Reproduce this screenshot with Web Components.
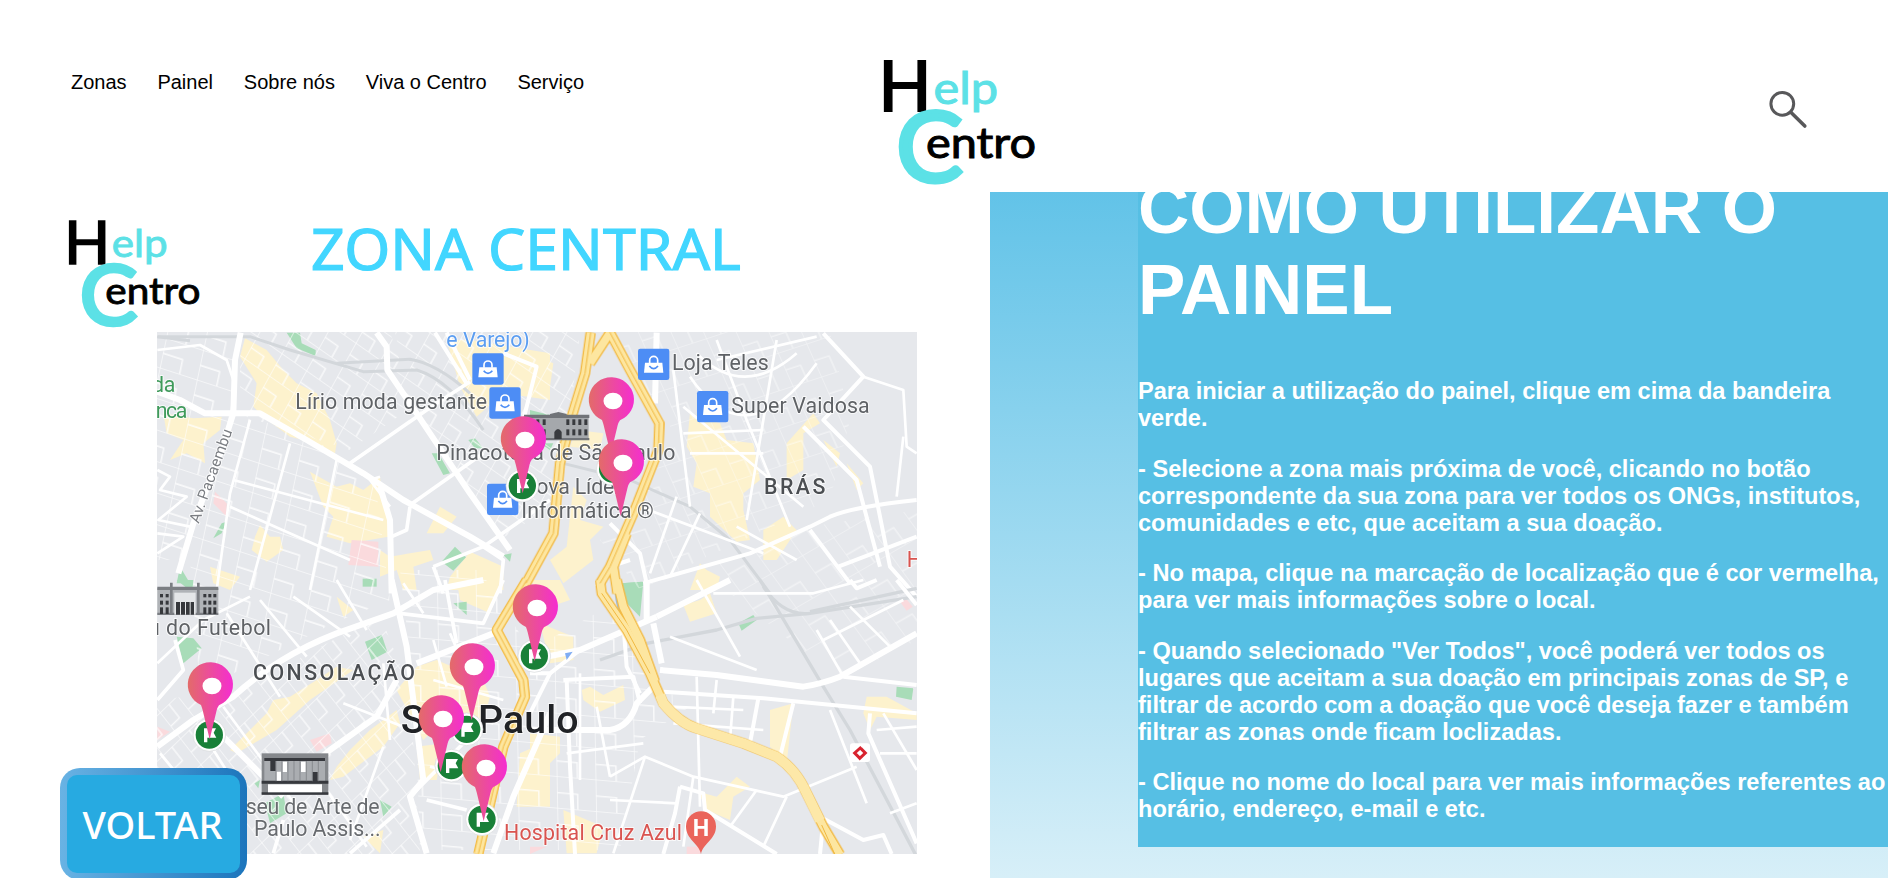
<!DOCTYPE html>
<html lang="pt-BR">
<head>
<meta charset="utf-8">
<title>Help Centro - Zona Central</title>
<style>
html, body { margin: 0; height: 100%; background: #fff; overflow: hidden; font-family: "Liberation Sans", Arial, sans-serif; }
</style>
</head>
<body>
<help-page>
  <site-header slot="header">
    <nav-link>Zonas</nav-link><nav-link>Painel</nav-link><nav-link>Sobre nós</nav-link><nav-link>Viva o Centro</nav-link><nav-link>Serviço</nav-link>
  </site-header>
  <zone-board slot="board">
    <back-button>VOLTAR</back-button>
  </zone-board>
  <guide-panel slot="panel">
    <span slot="title">COMO UTILIZAR O PAINEL</span>
    <guide-step>Para iniciar a utilização do painel, clique em cima da bandeira verde.</guide-step>
    <guide-step>- Selecione a zona mais próxima de você, clicando no botão correspondente da sua zona para ver todos os ONGs, institutos, comunidades e etc, que aceitam a sua doação.</guide-step>
    <guide-step>- No mapa, clique na marcação de localização que é cor vermelha, para ver mais informações sobre o local.</guide-step>
    <guide-step>- Quando selecionado "Ver Todos", você poderá ver todos os lugares que aceitam a sua doação em principais zonas de SP, e filtrar de acordo com a doação que você deseja fazer e também filtrar as zonas onde ficam loclizadas.</guide-step>
    <guide-step>- Clique no nome do local para ver mais informações referentes ao horário, endereço, e-mail e etc.</guide-step>
  </guide-panel>
</help-page>

<script>
const define = (name, html) => customElements.define(name, class extends HTMLElement {
  constructor() {
    super();
    this.attachShadow({ mode: 'open' }).innerHTML = html;
  }
});

define('help-page', `
<style>
:host { display: grid; grid-template-rows: 192px 686px; grid-template-columns: 990px 898px; width: 1894px; height: 878px; overflow: hidden; }
slot[name=header]::slotted(*) { grid-column: 1 / -1; }
</style>
<slot name="header"></slot><slot name="board"></slot><slot name="panel"></slot>`);

define('site-header', `
<style>
:host { display: grid; grid-template-columns: 884px 152px 1fr; width: 1894px; height: 192px; background: #fff; box-sizing: border-box; align-items: start; }
nav { display: flex; gap: 30.8px; padding: 70px 0 0 71px; }
help-logo { width: 152px; height: 126px; margin-top: 59px; }
search-icon { margin: 90px 0 0 732px; }
</style>
<nav><slot></slot></nav><help-logo></help-logo><search-icon></search-icon>`);

define('nav-link', `
<style>:host { display: block; color: #000; font-size: 20px; line-height: 24px; white-space: nowrap; }</style><slot></slot>`);

define('search-icon', `
<style>:host { display: block; width: 40px; height: 40px; } svg { display: block; }</style>
<svg width="40" height="40" viewBox="1768 90 40 40" fill="none" stroke="#58585a"><circle cx="1782.3" cy="103.8" r="11.4" stroke-width="3"/><path d="M1790.8 112.3L1804.8 126" stroke-width="3.6" stroke-linecap="round"/></svg>`);

define('help-logo', `
<style>:host { display: block; } svg { display: block; width: 100%; height: 100%; overflow: visible; } text { font-family: Lato, sans-serif; }</style>
<svg viewBox="0 0 152 126">
<text x="-5.500" y="51.500" font-size="70" textLength="53" lengthAdjust="spacingAndGlyphs" stroke="#000" stroke-width="2">H</text>
<g fill="#5ce1e6" stroke="#5ce1e6"><text x="49.500" y="44.500" font-size="44" textLength="64.500" lengthAdjust="spacingAndGlyphs" stroke-width="1">elp</text>
<text x="12" y="122.500" font-size="97" textLength="67" lengthAdjust="spacingAndGlyphs" stroke-width="4">C</text></g>
<text x="42" y="98.500" font-size="43" textLength="110" lengthAdjust="spacingAndGlyphs" stroke="#000" stroke-width="1">entro</text>
</svg>`);

define('zone-board', `
<style>
:host { display: block; position: relative; width: 990px; height: 686px; overflow: hidden; }
header { display: flex; height: 140px; padding: 27px 0 0 68.5px; box-sizing: border-box; }
help-logo { width: 131.5px; height: 109px; flex: none; }
.title { margin-left: 108px; overflow: visible; }
zone-map { margin-left: 157px; }
::slotted(back-button) { position: absolute; left: 60px; top: 576px; }
</style>
<header><help-logo></help-logo>
<svg class="title" width="440" height="60" viewBox="308 219 440 60"><text x="311" y="270" font-family="Noto Sans, sans-serif" font-size="57" fill="#42d6ff" stroke="#42d6ff" stroke-width="1.2" textLength="430" lengthAdjust="spacingAndGlyphs">ZONA CENTRAL</text></svg>
</header>
<zone-map></zone-map><slot></slot>`);

define('back-button', `
<style>
:host { display: flex; width: 187px; height: 112px; box-sizing: border-box; padding: 7px; border-radius: 20px; background: linear-gradient(90deg, #69b3e4, #1c75bc); }
div { flex: 1; border-radius: 10px; background: #27aae1; height: 98px; display: flex; align-items: center; justify-content: center; color: #fff; font: 500 38px/52px "Noto Sans", sans-serif; }
span { display: block; margin-left: -2px; }
</style><div><span><slot></slot></span></div>`);

define('guide-panel', `
<style>
:host { display: block; width: 898px; height: 686px; overflow: hidden; background: linear-gradient(#62c3e8, #d7eff8); }
section { display: flow-root; margin-left: 148px; width: 750px; height: 655px; background: #56bfe4; color: #fff; font-weight: 700; overflow: hidden; box-sizing: border-box; }
h1 { font-size: 71px; line-height: 80.5px; margin: -23px 0 48px; }
</style>
<section><h1><slot name="title"></slot></h1><slot></slot></section>`);

define('guide-step', `
<style>:host { display: block; font-size: 23.6px; line-height: 27px; margin-bottom: 23.5px; font-weight: 700; }</style><slot></slot>`);

/* Map artwork: four quadrants drawn in a grid three times finer than a pixel. */
const Q = { A: [150, 320], B: [530, 320], C: [150, 580], D: [530, 580] };
const quad = (k, body) => `<g transform="translate(${Q[k]}) scale(.33333)">${body}</g>`;
const poly = (c, list) => list.map(p => `<path fill="${c}" d="M${p}Z"/>`).join('');
const road = (w, list, c = '#fff') => list.map(p => `<path d="M${p}" fill="none" stroke="${c}" stroke-width="${w}" stroke-linejoin="round"/>`).join('');
const Y = '#fdf2cd', G = '#a8dcb8', P = '#fadadd', R = '#d3d7db';
const grid = (id, w, h, a) => `<pattern id="${id}" width="${w * 1.5}" height="${h * 1.5}" patternUnits="userSpaceOnUse" patternTransform="rotate(${a}) skewX(6)"><path d="M0 0H${w * 1.5}M0 0V${h * 1.5}M0 ${h * .78}H${w * .8}V${h * 1.5}" stroke="#fff" stroke-width="1.500" fill="none"/></pattern>`;
const lands = {
A: poly(Y, ['285 55 350 90 400 150 440 190 500 220 540 300 560 370 555 400 500 370 420 350 340 290 310 260 320 190 270 110','40 280 130 295 215 290 210 330 160 370 165 430 110 400 60 420 100 360 50 340','480 455 560 500 600 490 640 510 690 470 700 560 720 600 715 650 600 670 530 650 550 590 520 560','330 615 360 650 390 650 400 690 350 725 305 690 315 650','690 690 720 710 840 690 850 720 790 740 800 810 760 810 740 750 690 770','870 560 920 590 880 640 830 640','960 695 1060 740 1060 810 890 810 900 770','890 60 960 60 1200 100 1200 240 1060 220 980 290 930 200','180 740 270 770 240 810 190 790'])
 + poly(G, ['410 38 450 38 455 70 497 90 497 108 440 85','845 400 865 400 900 460 880 465','955 360 975 355 1000 385 975 385','915 680 948 712 910 752 875 725','638 776 680 776 680 800 638 800','215 610 230 605 215 640 190 655','90 740 120 790 80 790','1060 705 1085 700 1080 725'])
 + poly(P, ['195 515 230 550 230 590 190 550','605 660 685 665 685 740 595 735']),
B: poly(Y, ['480 280 570 310 590 360 670 370 690 480 640 520 640 570 660 660 620 665 540 590 540 520 490 500 500 430 470 380','770 370 850 280 870 310 820 340 820 450 770 480','700 630 760 590 800 630 740 720 700 720','130 500 170 540 150 600 220 620 180 660 190 720 100 790 60 720 110 680','510 730 530 750 570 770 560 810 480 810','0 100 70 130 60 200 20 210','140 330 220 340 210 390 120 380','880 360 930 400 920 440','950 430 1000 490 980 510'])
 + poly(G, ['0 270 60 285 0 290','30 370 70 370 60 390','275 790 335 785 335 810 275 810']),
C: poly(Y, ['350 400 370 360 420 350 500 300 560 260 610 270 480 360 380 450 260 520 240 510','540 600 560 560 600 510 660 450 740 390 750 430 700 500 580 590','740 330 800 260 860 240 1000 300 1020 350 1000 420 900 400 820 480','920 0 1060 0 1020 100 930 60','1110 520 1200 480 1200 680 1100 680','640 770 700 750 690 820','560 50 610 90 580 110','800 500 880 490 860 600 810 600'])
 + poly(G, ['80 0 130 0 130 40','80 170 130 175 155 205 100 250','645 185 695 165 712 215 665 240','910 70 950 65 950 105','345 670 400 640 410 700 360 730','690 660 725 680 700 710','313 610 330 600 325 625'])
 + poly(P, ['480 480 540 460 545 490 500 515','22 440 60 455 22 480']),
D: poly(Y, ['155 330 180 320 220 345 280 315 285 360 210 395 160 360','460 75 510 60 540 40 560 100 480 125','0 460 90 470 90 520 60 550 60 670 0 670','720 390 790 370 770 550 720 500','505 635 560 650 620 590 660 620 610 650 600 720 530 690','1000 400 1010 350 1070 350 1160 400 1160 420 1040 410 1020 450','30 130 130 170 130 240 60 250','0 0 90 0 120 60 60 80','100 690 220 740 200 820 110 820'])
 + poly(G, ['275 10 340 5 330 110 290 70','625 130 670 105 680 120 635 152','1100 320 1150 325 1145 360 1098 350'])
 + poly(P, ['1110 65 1125 52 1148 80 1130 92','470 800 510 800 510 822 470 822','0 800 50 800 0 822'])
};
const roads = {
A: road(9, ['22 50L120 62','22 50L300 50 420 90 640 155 800 150Q900 180 1000 330','560 130L780 118Q860 130 960 220'], R)
 + road(8, ['22 90L150 75 230 120 250 180','600 430L700 360','300 300L240 520 200 810','420 370L300 810','560 420L480 810','250 480L700 600','240 560L600 720','690 470L660 480 720 560','22 450L60 470 30 510 110 530 25 600 120 620','22 640L100 650 22 700'])
 + road(18, ['272 38L255 120 250 280 215 390 130 610 85 760','22 215L90 240 165 280 330 280 470 360 640 460 760 540 960 650 1060 710','680 38L710 80 712 150 800 280 960 520 1080 690','690 500L720 600 725 820'])
 + road(11, ['600 430L830 270 960 185','780 555L1000 400','725 650L770 630 780 560','850 740L1000 680 1200 540','850 740L880 820','1000 680L1060 720 1050 820'])
 + road(12, ['855 38L950 190','890 38L960 180','1060 100L1160 140 1120 300']),
B: road(9, ['100 430L300 480 480 560 600 660 720 820'], R)
 + road(8, ['430 150L480 560','500 100Q640 240 800 100','480 170Q650 420 860 130','460 260L820 560','560 60L650 300 780 620','740 60L650 600','460 340L700 330','480 400H700','620 620L800 720','330 560L700 700','440 530L360 760','510 580L420 770','1000 170L1120 210 1130 380 1160 400','1120 350L1100 530','560 120L860 50'])
 + road(18, ['380 38L375 250'])
 + road(12, ['880 40L1000 170 880 300 1020 440 1080 740 1160 830','820 320L980 480 1050 740','340 790L660 700 840 620 900 590Q970 560 1160 540','350 790L330 700 240 610','840 630L960 790','925 740L1160 650','300 720L240 740 200 800']),
C: road(8, ['22 250L160 120 300 50','230 100L390 350','330 60L470 230','430 50L600 170','560 0L650 150','140 430L310 700','220 380L440 680','30 520L180 700','22 590L150 690','820 100L760 10','850 300L1060 360','830 380L1030 430','850 180L890 320','700 250L720 480','580 370L760 440','480 560L650 800','700 500L600 780','900 160L960 300','840 560L1000 600'])
 + road(18, ['22 500L130 420 250 350Q380 230 560 160L730 100 850 30 1000 0','725 0L770 200 820 600 780 650 830 820','740 300L680 410 540 510 480 560','200 450L400 650','1200 400L1090 650 1030 820','800 250L1030 160'])
 + road(11, ['22 360L100 270 75 180','750 100L1000 130 1060 0','885 0L920 190','830 660L950 690','780 650L950 480','600 820L750 690','400 720L370 820']),
D: road(10, ['690 0L880 320 960 450 1060 640 1160 830','840 95L1160 25','210 240L350 190 560 150 680 115 840 100 1160 50','700 20Q760 110 840 100'], R)
 + road(8, ['500 0L630 230','550 40L850 40 1000 0','420 170L680 270','860 150L940 290','900 120L990 250','960 80L1080 200','880 180L1120 60','500 290L510 680','560 300L550 400','610 350L600 480','240 590L345 530 490 590 760 650 980 560','150 280L150 600','200 380L240 590','110 520L340 490','345 530L250 820','240 660L440 670','490 590L460 800','420 380L640 390','430 430L700 450','680 630L600 740','770 650L700 800','900 390L1010 670','1060 400L1160 570','1080 700L1160 670','1050 520H1160','1040 450L1160 440'])
 + road(18, ['380 110L600 0','0 240L150 210 380 110','390 270L560 285 820 320Q880 310 930 290L1160 160','370 130L395 250','350 0L350 120','0 450L240 450Q300 440 320 370L370 320'])
 + road(12, ['940 290L1160 315','400 335L700 355 1160 400','685 355L660 490','790 370L750 530','1020 400L1015 460 1160 790','110 300L120 560 135 822','100 300L310 290 330 370','280 130L290 260 330 340','1100 0L1160 75','960 0L980 25 1040 0','870 710L1000 780 1060 765 1085 822','870 822L880 720','450 620L520 640 525 690 740 822','450 620L435 700 400 822','0 280L60 280 150 210','60 280L0 400'])
};
const HW = {
B: ['182 38L165 160 125 290 90 430 70 640 -12 790','240 38L300 150 388 310 385 390 310 580 240 740 210 790','240 38L180 130','290 640L250 740 262 820'],
C: ['1130 0L1040 150 1120 300 1125 350 1060 500 985 822'],
D: ['210 0L215 40 290 150 360 280 400 370Q450 430 500 445L640 490 740 530Q800 570 830 640L880 740 930 824','260 0L280 80 330 180 375 305']
};
const shop = (k, x, y) => quad(k, `<g transform="translate(${x} ${y})"><rect width="94" height="94" rx="7" fill="#4d8df5"/><path d="M21 42H73L76 72H18Z" fill="#fff"/><path d="M35 43V35a12 12 0 0 1 24 0v8" fill="none" stroke="#fff" stroke-width="5"/><path d="M34 52q13 16 26 0" fill="none" stroke="#4d8df5" stroke-width="5"/></g>`);
const flag = (k, x, y) => quad(k, `<g transform="translate(${x} ${y})"><circle r="49" fill="#fff" stroke="#d5d8da" stroke-width="2"/><circle r="41" fill="#198038"/><path d="M-16 22V-20H20L13 -7 21 8H-6V22Z" fill="#fff"/></g>`);
const pin = (k, x, y) => quad(k, `<g transform="translate(${x + 2} ${y + 1})"><path d="M67 0A67.500 67 0 0 1 91 129Q86 136 84 144L63 231 42 144Q40 136 37 128A67.500 67 0 0 1 67 0Z" fill="url(#pinfill)"/><ellipse cx="70" cy="71" rx="28.500" ry="25" fill="#fff"/></g>`);
const label = (k, x, y, w, s, t, c = '#5f6266', extra = '') => quad(k, `<text x="${x - 1}" y="${y + 1}" font-size="${s}" fill="${c}" textLength="${w}" ${extra}>${t}</text>`);
const windows = (x0, n, dx, y, h) => Array.from({ length: n }, (_, i) => `<rect x="${x0 + i * dx}" y="${y}" width="9" height="${h}"/>`).join('');
const museumA = quad('A', `<rect x="1128" y="290" width="188" height="70" fill="#a5a8ac"/><path d="M1122 284H1318V294H1122ZM1200 282L1225 276 1250 282V290H1200ZM1122 354H1318V361H1122Z" fill="#707378"/><g fill="#393b3f">${windows(1140, 3, 19, 298, 17) + windows(1140, 3, 19, 328, 18) + windows(1249, 4, 18, 298, 17) + windows(1249, 4, 18, 328, 18)}<path d="M1213 357V336Q1224 318 1235 336V357Z"/></g>`);
const museumF = quad('C', `<rect x="22" y="24" width="183" height="80" fill="#b0b3b7"/><path d="M22 20H205V30H22ZM60 8H68V104H60ZM141 8H149V104H141ZM22 98H205V105H22Z" fill="#7b7e83"/><path d="M73 38H137V104H73Z" fill="#e4e6e8"/><g fill="#36383c">${windows(30, 2, 17, 42, 10) + windows(30, 2, 17, 62, 12) + windows(30, 2, 17, 82, 20) + windows(160, 3, 15, 42, 10) + windows(160, 3, 15, 62, 12) + windows(160, 3, 15, 82, 20)}<path d="M78 66H90V104H78ZM93 66H105V104H93ZM108 66H119V104H108ZM122 66H132V104H122Z"/></g>`);
const museumM = quad('C', `<rect x="335" y="520" width="200" height="124" fill="#85888c"/><path d="M343 542H525V604H343Z" fill="#aaadb1"/><path d="M343 534H525V543H343ZM335 602H535V611H335ZM335 637H535V644H335ZM361 543H377V573H361ZM488 576H503V604H488Z" fill="#36383d"/><path d="M398 545H411V576H398ZM453 545H467V576H453ZM380 575H393V602H380ZM354 613H516V637H354Z" fill="#fff"/><path d="M378 543V604M396 543V604M414 543V604M432 543V604M450 543V604M469 543V604M487 543V604M505 543V604" stroke="#777a7f" stroke-width="2"/>`);

define('zone-map', `
<style>
:host { display: block; width: 760px; height: 521.5px; overflow: hidden; }
svg { display: block; }
text { font-family: Roboto, sans-serif; paint-order: stroke; stroke: rgba(255,255,255,.75); stroke-width: 6px; stroke-linejoin: round; }
.bare text { stroke: none; }
</style>
<svg width="760" height="522" viewBox="157 332 760 522" role="img">
<defs>
<linearGradient id="pinfill"><stop offset="0" stop-color="#e36b69"/><stop offset="1" stop-color="#f52dd0"/></linearGradient>
<filter id="soft"><feGaussianBlur stdDeviation=".6"/></filter>
${grid('g1', 26, 20, 18) + grid('g2', 20, 17, 35) + grid('g3', 20, 24, -18) + grid('g4', 26, 21, 5) + grid('g5', 24, 28, -30) + grid('g6', 22, 16, 52)}
</defs>
<g filter="url(#soft)">
<rect x="150" y="325" width="775" height="535" fill="#e6e8ec"/>
${Object.keys(Q).map(k => quad(k, lands[k])).join('')}
<g opacity=".75">
<path fill="url(#g1)" d="M157 332L235 332 232 415 300 430 375 480 390 600 330 625 200 690 190 560 157 560Z"/>
<path fill="url(#g2)" d="M240 332H390L415 405 350 450 240 415ZM395 332H580L560 500 500 540 410 400Z"/>
<path fill="url(#g3)" d="M600 332H830L850 420 830 500 700 560 640 590 600 540 680 440Z" opacity=".6"/>
<path fill="url(#g5)" d="M700 570L820 525 917 510V640L840 680Z" opacity=".6"/>
<path fill="url(#g4)" d="M400 570H480L530 650 620 600 650 690 700 700 640 740 620 850H420L415 700Z"/>
<path fill="url(#g6)" d="M157 700L240 690 380 615 410 690 420 854H157Z"/>
</g>
${Object.keys(Q).map(k => quad(k, roads[k])).join('')}
${quad('D', '<path d="M255 -5Q255 70 278 120" fill="none" stroke="#8bb8f2" stroke-width="7"/><path d="M105 220L128 215 110 240Z" fill="#80adf3"/>')}
${Object.keys(HW).map(k => quad(k, road(31, HW[k], '#f3bb45'))).join('')}
${Object.keys(HW).map(k => quad(k, road(23, HW[k], '#fde6a0'))).join('')}
${Object.keys(HW).map(k => quad(k, road(3, HW[k].slice(0, k === 'B' ? 2 : 1).filter(() => k !== 'D'), '#f0b840'))).join('')}
${quad('D', road(29, ['390 345L400 370Q450 430 500 445L640 490 740 530Q800 570 830 640L870 722'], '#fde8a8') + road(3, ['875 735L915 824', '215 40L290 150 360 280'], '#f0b840'))}
</g>
${museumA + museumF + museumM}
${label('A', 890, 80, 250, 64, 'e Varejo)', '#5b9df1')}
${label('A', 437, 266, 575, 64, 'Lírio moda gestante')}
${label('A', 7, 215, 70, 64, 'da', '#3f9a5b')}
${label('A', 18, 294, 95, 64, 'nca', '#3f9a5b')}
${label('A', 860, 420, 717, 64, 'Pinacoteca de São Paulo')}
${label('A', 1115, 522, 300, 64, 'Nova Líder')}
${label('A', 1115, 592, 397, 64, 'Informática ®')}
${quad('A', '<text transform="translate(146 612) rotate(-70)" font-size="46" fill="#7b7e83" textLength="296">Av. Pacaembu</text>')}
${label('B', 427, 150, 290, 64, 'Loja Teles')}
${label('B', 605, 277, 415, 64, 'Super Vaidosa')}
${label('B', 703, 522, 184, 64, 'BRÁS', '#4b4e52', 'font-weight="500"')}
${label('B', 1131, 740, 46, 64, 'H', '#d95450')}
${label('C', -5, 164, 369, 64, 'u do Futebol')}
${label('C', 310, 300, 486, 64, 'CONSOLAÇÃO', '#4b4e52', 'font-weight="500"')}
${label('C', 753, 458, 534, 118, 'São Paulo', '#202226', 'font-weight="500"')}
${label('C', 288, 700, 402, 64, 'seu de Arte de', '#686b6f')}
${label('C', 313, 768, 380, 64, 'Paulo Assis...', '#686b6f')}
${label('C', 1063, 780, 534, 64, 'Hospital Cruz Azul', '#d95450')}
${shop('A', 967, 100) + shop('A', 1018, 202) + shop('A', 1011, 491) + shop('B', 324, 86) + shop('B', 501, 213)}
${quad('D', '<path d="M513 823C508 790 468 780 468 739A45 45 0 0 1 558 739C558 780 518 790 513 823Z" fill="#ea645b"/><g class="bare"><text x="513" y="767" font-size="70" font-weight="700" fill="#fff" text-anchor="middle">H</text></g><rect x="960" y="490" width="60" height="56" rx="8" fill="#fff"/><path d="M994 501L974 519 987 532M986 538L1006 519 993 506" fill="none" stroke="#d8232f" stroke-width="9"/>')}
${flag('A', 1117, 497) + flag('B', 248, 447) + flag('C', 178, 465) + flag('C', 1153, 228) + flag('C', 950, 448) + flag('C', 904, 557) + flag('C', 996, 718)}
${pin('A', 1053, 288) + pin('B', 177, 171) + pin('B', 207, 357) + pin('C', 114, 246) + pin('C', 1089, 12) + pin('C', 900, 189) + pin('C', 807, 345) + pin('C', 936, 492)}
</svg>`);
</script>
</body>
</html>
